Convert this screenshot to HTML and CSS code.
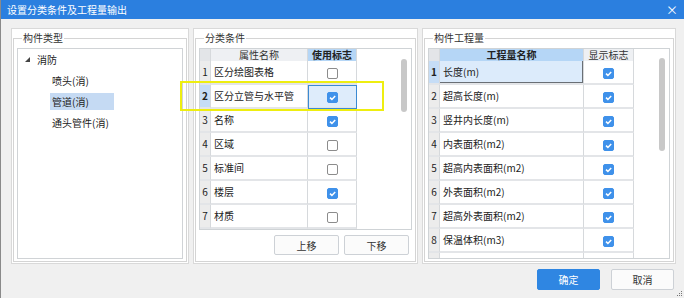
FILE: index.html
```html
<!DOCTYPE html>
<html lang="zh-CN">
<head>
  <meta charset="UTF-8" />
  <title>设置分类条件及工程量输出</title>
  <link rel="stylesheet" href="styles.css">
</head>
<body>
  <div class="window">
    <!-- Title bar -->
    <div class="titlebar">
      <span class="title">设置分类条件及工程量输出</span>
      <span class="close">×</span>
    </div>

    <div class="main">
      <!-- 构件类型 -->
      <div class="panel panel-type">
        <fieldset class="group">
          <legend>构件类型</legend>
          <div class="list-box">
            <div class="tree-row root">
              <svg class="caret" width="5" height="5" viewBox="0 0 5 5"><polygon points="5,0 5,5 0,5" fill="#444"/></svg>
              <span>消防</span>
            </div>
            <div class="tree-row child"><span class="item">喷头(消)</span></div>
            <div class="tree-row child"><span class="item selected">管道(消)</span></div>
            <div class="tree-row child"><span class="item">通头管件(消)</span></div>
          </div>
        </fieldset>
      </div>

      <!-- 分类条件 -->
      <div class="panel panel-cond">
        <fieldset class="group">
          <legend>分类条件</legend>
          <div class="grid-box cond-box">
            <table class="grid cond-grid">
              <tr>
                <th class="num"></th>
                <th class="name">属性名称</th>
                <th class="flag hl">使用标志</th>
              </tr>
              <tr>
                <td class="num">1</td><td class="name">区分绘图表格</td>
                <td class="flag"><span class="cb"></span></td>
              </tr>
              <tr class="sel">
                <td class="num">2</td><td class="name">区分立管与水平管</td>
                <td class="flag active"><span class="cb on"><svg viewBox="0 0 11 11"><path d="M3 5.6 L4.9 7.4 L8.2 3.9"/></svg></span></td>
              </tr>
              <tr>
                <td class="num">3</td><td class="name">名称</td>
                <td class="flag"><span class="cb on"><svg viewBox="0 0 11 11"><path d="M3 5.6 L4.9 7.4 L8.2 3.9"/></svg></span></td>
              </tr>
              <tr>
                <td class="num">4</td><td class="name">区域</td>
                <td class="flag"><span class="cb"></span></td>
              </tr>
              <tr>
                <td class="num">5</td><td class="name">标准间</td>
                <td class="flag"><span class="cb"></span></td>
              </tr>
              <tr>
                <td class="num">6</td><td class="name">楼层</td>
                <td class="flag"><span class="cb on"><svg viewBox="0 0 11 11"><path d="M3 5.6 L4.9 7.4 L8.2 3.9"/></svg></span></td>
              </tr>
              <tr>
                <td class="num">7</td><td class="name">材质</td>
                <td class="flag"><span class="cb"></span></td>
              </tr>
            </table>
            <div class="vscroll cond-scroll"></div>
          </div>
          <div class="btn-row">
            <button class="btn">上移</button>
            <button class="btn">下移</button>
          </div>
        </fieldset>
      </div>

      <!-- 构件工程量 -->
      <div class="panel panel-qty">
        <fieldset class="group">
          <legend>构件工程量</legend>
          <div class="grid-box qty-box">
            <table class="grid qty-grid">
              <tr>
                <th class="num"></th>
                <th class="name hl">工程量名称</th>
                <th class="flag">显示标志</th>
              </tr>
              <tr class="sel">
                <td class="num">1</td><td class="name editing">长度(m)</td>
                <td class="flag"><span class="cb on"><svg viewBox="0 0 11 11"><path d="M3 5.6 L4.9 7.4 L8.2 3.9"/></svg></span></td>
              </tr>
              <tr>
                <td class="num">2</td><td class="name">超高长度(m)</td>
                <td class="flag"><span class="cb on"><svg viewBox="0 0 11 11"><path d="M3 5.6 L4.9 7.4 L8.2 3.9"/></svg></span></td>
              </tr>
              <tr>
                <td class="num">3</td><td class="name">竖井内长度(m)</td>
                <td class="flag"><span class="cb on"><svg viewBox="0 0 11 11"><path d="M3 5.6 L4.9 7.4 L8.2 3.9"/></svg></span></td>
              </tr>
              <tr>
                <td class="num">4</td><td class="name">内表面积(m2)</td>
                <td class="flag"><span class="cb on"><svg viewBox="0 0 11 11"><path d="M3 5.6 L4.9 7.4 L8.2 3.9"/></svg></span></td>
              </tr>
              <tr>
                <td class="num">5</td><td class="name">超高内表面积(m2)</td>
                <td class="flag"><span class="cb on"><svg viewBox="0 0 11 11"><path d="M3 5.6 L4.9 7.4 L8.2 3.9"/></svg></span></td>
              </tr>
              <tr>
                <td class="num">6</td><td class="name">外表面积(m2)</td>
                <td class="flag"><span class="cb on"><svg viewBox="0 0 11 11"><path d="M3 5.6 L4.9 7.4 L8.2 3.9"/></svg></span></td>
              </tr>
              <tr>
                <td class="num">7</td><td class="name">超高外表面积(m2)</td>
                <td class="flag"><span class="cb on"><svg viewBox="0 0 11 11"><path d="M3 5.6 L4.9 7.4 L8.2 3.9"/></svg></span></td>
              </tr>
              <tr>
                <td class="num">8</td><td class="name">保温体积(m3)</td>
                <td class="flag"><span class="cb on"><svg viewBox="0 0 11 11"><path d="M3 5.6 L4.9 7.4 L8.2 3.9"/></svg></span></td>
              </tr>
              <tr>
                <td class="num"></td><td class="name"></td><td class="flag"></td>
              </tr>
            </table>
            <div class="vscroll qty-scroll"></div>
          </div>
        </fieldset>
      </div>
    </div>

    <!-- Footer buttons -->
    <div class="footer">
      <button class="btn btn-wide primary">确定</button>
      <button class="btn btn-wide">取消</button>
    </div>

    <!-- annotation box -->
    <div class="mark"></div>

    <svg class="grip" width="7" height="7" viewBox="0 0 7 7">
      <rect x="5" y="1" width="1" height="1" fill="#777"/>
      <rect x="3" y="3" width="1" height="1" fill="#777"/>
      <rect x="5" y="3" width="1" height="1" fill="#777"/>
      <rect x="1" y="5" width="1" height="1" fill="#777"/>
      <rect x="3" y="5" width="1" height="1" fill="#777"/>
      <rect x="5" y="5" width="1" height="1" fill="#777"/>
    </svg>
  </div>
</body>
</html>
```

FILE: styles.css
```css
body {
  margin: 0;
  font-family: "Noto Sans CJK SC", "Noto Sans", sans-serif;
  font-size: 10px;
  color: #222;
}

.window {
  position: relative;
  width: 684px;
  height: 298px;
  box-sizing: border-box;
  background: #f0f0f0;
  border-left: 1px solid #8a8a8a;
  overflow: hidden;
}

/* Title bar */
.titlebar {
  height: 19px;
  display: flex;
  align-items: center;
  justify-content: space-between;
  padding: 0 6px 0 6px;
  background: #2b7fdf;
  color: #fff;
}

.close {
  font-size: 12px;
  line-height: 12px;
}

/* Panels */
.main {
  display: flex;
  gap: 4px;
  padding: 9px 0 0 10px;
  height: 236px;
}

.panel {
  box-sizing: border-box;
  height: 236px;
  display: flex;
  padding: 1px;
  background: #fff;
  border: 1px solid #d9d9d9;
}

.panel-type { width: 178px; }
.panel-cond { width: 225px; }
.panel-qty { width: 254px; }

.group {
  flex: 1;
  min-width: 0;
  display: flex;
  flex-direction: column;
  margin: 1px 0 0;
  padding: 3px 3px 2px;
  border: 1px solid #d4d4d4;
}

.group legend {
  margin-left: 5px;
  padding: 0 1px;
  line-height: 14px;
  color: #333;
}

/* Tree list */
.list-box {
  flex: 1;
  background: #fff;
  border: 1px solid #d0d3d6;
}

.tree-row {
  height: 21px;
  display: flex;
  align-items: center;
}

.tree-row.root {
  padding-left: 7px;
  gap: 7px;
}

.tree-row.child {
  padding-left: 32px;
}

.item {
  display: inline-block;
  box-sizing: border-box;
  min-width: 64px;
  height: 17px;
  line-height: 17px;
  padding: 0 2px;
}

.item.selected {
  background: #c5daf3;
}

/* Grids */
.grid-box {
  position: relative;
  box-sizing: border-box;
  background: #fff;
  border: 1px solid #cfd3d6;
  overflow: hidden;
}

.cond-box { height: 182px; }
.qty-box { flex: 1; }

.grid {
  border-collapse: separate;
  border-spacing: 0;
  table-layout: fixed;
}

.cond-grid { width: 157px; }
.qty-grid { width: 205px; }

.grid th,
.grid td {
  padding: 0;
  border-right: 1px solid #d6d9dc;
  white-space: nowrap;
}

.grid td {
  overflow: hidden;
}

.grid th {
  height: 12px;
  line-height: 12px;
  font-weight: normal;
  color: #333;
  background: #eef0f3;
}

.grid th.num { background: #e3e5e8; }

.grid th.hl {
  background: #b5d6f6;
  font-weight: bold;
  color: #222;
}

.grid td {
  height: 22px;
  line-height: 22px;
  border-bottom: 2px solid #e3e5e8;
}

.grid .num {
  width: 10px;
  text-align: center;
}

.grid td.num { background: #ececec; }

.cond-grid .name { width: 96px; }
.cond-grid .flag { width: 48px; }
.qty-grid .name { width: 143px; }
.qty-grid .flag { width: 49px; }

.grid td.name { padding-left: 3px; }
.grid td.flag { text-align: center; }

.grid tr.sel td.num {
  background: #c6ddf6;
  font-weight: bold;
}

.grid td.active {
  background: #deecfb;
  outline: 1px solid #3b8ad2;
  outline-offset: -1px;
}

.grid td.editing {
  background: #dcebfb;
  box-shadow: inset -1px -1px 0 #6a6f75;
}

/* Checkboxes */
.cb {
  display: inline-block;
  box-sizing: border-box;
  width: 11px;
  height: 11px;
  vertical-align: middle;
  background: #fff;
  border: 1px solid #8c8c8c;
  border-radius: 2px;
}

.cb.on {
  background: #3f91ea;
  border-color: #3f91ea;
}

.cb svg {
  display: block;
  width: 11px;
  height: 11px;
  margin: -1px;
}

.cb svg path {
  fill: none;
  stroke: #fff;
  stroke-width: 1.5;
}

.vscroll {
  position: absolute;
  right: 4px;
  width: 6px;
  border-radius: 3px;
  background: #c8c8c8;
}

.cond-scroll { top: 10px; height: 53px; }
.qty-scroll { top: 9px; height: 93px; }

/* Buttons */
.btn-row {
  display: flex;
  justify-content: flex-end;
  gap: 5px;
  margin-top: 5px;
  padding-right: 3px;
}

.btn {
  box-sizing: border-box;
  width: 65px;
  height: 20px;
  padding: 0;
  font: inherit;
  color: #333;
  background: #fbfbfb;
  border: 1px solid #cdd1d6;
  border-radius: 2px;
}

.footer {
  display: flex;
  justify-content: flex-end;
  gap: 11px;
  padding: 5px 10px 0 0;
}

.btn-wide {
  width: 63px;
  height: 21px;
}

.btn.primary {
  color: #fff;
  background: #2f86e2;
  border-color: #2f86e2;
}

/* annotation overlay */
.mark {
  position: absolute;
  left: 179px;
  top: 81px;
  width: 204px;
  height: 30px;
  box-sizing: border-box;
  border: 2px solid #eeee10;
}

.grip {
  position: absolute;
  right: 1px;
  bottom: 1px;
}
```
